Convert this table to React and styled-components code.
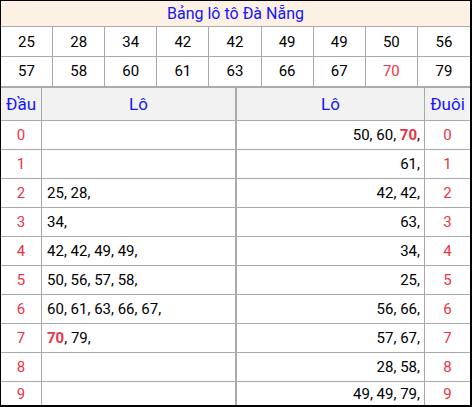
import React from "react";
import styled, { createGlobalStyle } from "styled-components";

const Global = createGlobalStyle`
  html, body { margin: 0; padding: 0; background: #fff; }
  body { font-family: Roboto, "Liberation Sans", Arial, sans-serif; }
`;

const LINE = "#aaaaaa";
const BLUE = "#1414ff";
const RED = "#ec3348";

const Frame = styled.div`
  box-sizing: border-box;
  width: 472px;
  height: 407px;
  border-style: solid;
  border-color: #000;
  border-width: 1px 2px 2px 1px;
  overflow: hidden;
  display: flex;
  flex-direction: column;
`;

const Title = styled.div`
  height: 25px;
  flex: none;
  background: #fdf0e5;
  border-bottom: 1px solid ${LINE};
  color: ${BLUE};
  font-size: 16px;
  display: flex;
  align-items: center;
  justify-content: center;
`;

const NumGrid = styled.div`
  display: grid;
  grid-template-columns: repeat(9, 1fr);
  flex: none;
`;

const NumCell = styled.div`
  box-sizing: border-box;
  height: ${(p) => (p.$last ? 31 : 30)}px;
  border-bottom: ${(p) => (p.$last ? 2 : 1)}px solid ${LINE};
  border-right: ${(p) => (p.$end ? 0 : 1)}px solid ${LINE};
  display: flex;
  align-items: center;
  justify-content: center;
  padding-bottom: ${(p) => (p.$last ? 1 : 0)}px;
  font-size: 15px;
  color: ${(p) => (p.$red ? RED : "#000")};
`;

const LotoGrid = styled.div`
  flex: 1;
  display: grid;
  grid-template-columns: 41px 195px 188px 45px;
  grid-template-rows: 33px repeat(9, 29px) 1fr;
`;

const Head = styled.div`
  box-sizing: border-box;
  background: #f2f2f2;
  border-bottom: 1px solid ${LINE};
  border-right: ${(p) => p.$br || 0}px solid ${LINE};
  color: ${BLUE};
  font-size: 17px;
  display: flex;
  align-items: center;
  justify-content: center;
  padding-bottom: 1px;
`;

const Digit = styled.div`
  box-sizing: border-box;
  border-bottom: ${(p) => (p.$last ? 0 : 1)}px solid ${LINE};
  border-right: ${(p) => p.$br || 0}px solid ${LINE};
  color: ${RED};
  font-size: 15px;
  display: flex;
  align-items: center;
  justify-content: center;
`;

const Lo = styled.div`
  box-sizing: border-box;
  border-bottom: ${(p) => (p.$last ? 0 : 1)}px solid ${LINE};
  border-right: ${(p) => p.$br || 0}px solid ${LINE};
  font-size: 15px;
  color: #000;
  display: flex;
  align-items: center;
  justify-content: ${(p) => (p.$right ? "flex-end" : "flex-start")};
  padding: 0 4px 0 5px;
  white-space: pre;
`;

const Hot = styled.b`
  color: ${RED};
  font-weight: 700;
`;

const nums = [
  "25", "28", "34", "42", "42", "49", "49", "50", "56",
  "57", "58", "60", "61", "63", "66", "67", "70", "79",
];

const dau = [
  [], [], ["25", "28"], ["34"], ["42", "42", "49", "49"],
  ["50", "56", "57", "58"], ["60", "61", "63", "66", "67"], ["70", "79"], [], [],
];
const duoi = [
  ["50", "60", "70"], ["61"], ["42", "42"], ["63"], ["34"],
  ["25"], ["56", "66"], ["57", "67"], ["28", "58"], ["49", "49", "79"],
];

const List = ({ items }) =>
  items.map((n, i) => (
    <React.Fragment key={i}>
      {i > 0 ? " " : ""}
      {n === "70" ? <Hot>{n}</Hot> : n}
      {","}
    </React.Fragment>
  ));

export default function App() {
  return (
    <>
      <Global />
      <Frame>
        <Title>Bảng lô tô Đà Nẵng</Title>
        <NumGrid>
          {nums.map((n, i) => (
            <NumCell key={i} $last={i >= 9} $end={i % 9 === 8} $red={n === "70"}>
              {n}
            </NumCell>
          ))}
        </NumGrid>
        <LotoGrid>
          <Head $br={1}>Đầu</Head>
          <Head $br={2}>Lô</Head>
          <Head $br={1}>Lô</Head>
          <Head>Đuôi</Head>
          {dau.map((row, i) => {
            const last = i === 9;
            return (
              <React.Fragment key={i}>
                <Digit $br={1} $last={last}>{i}</Digit>
                <Lo $br={2} $last={last}><List items={row} /></Lo>
                <Lo $br={1} $last={last} $right><List items={duoi[i]} /></Lo>
                <Digit $last={last}>{i}</Digit>
              </React.Fragment>
            );
          })}
        </LotoGrid>
      </Frame>
    </>
  );
}
